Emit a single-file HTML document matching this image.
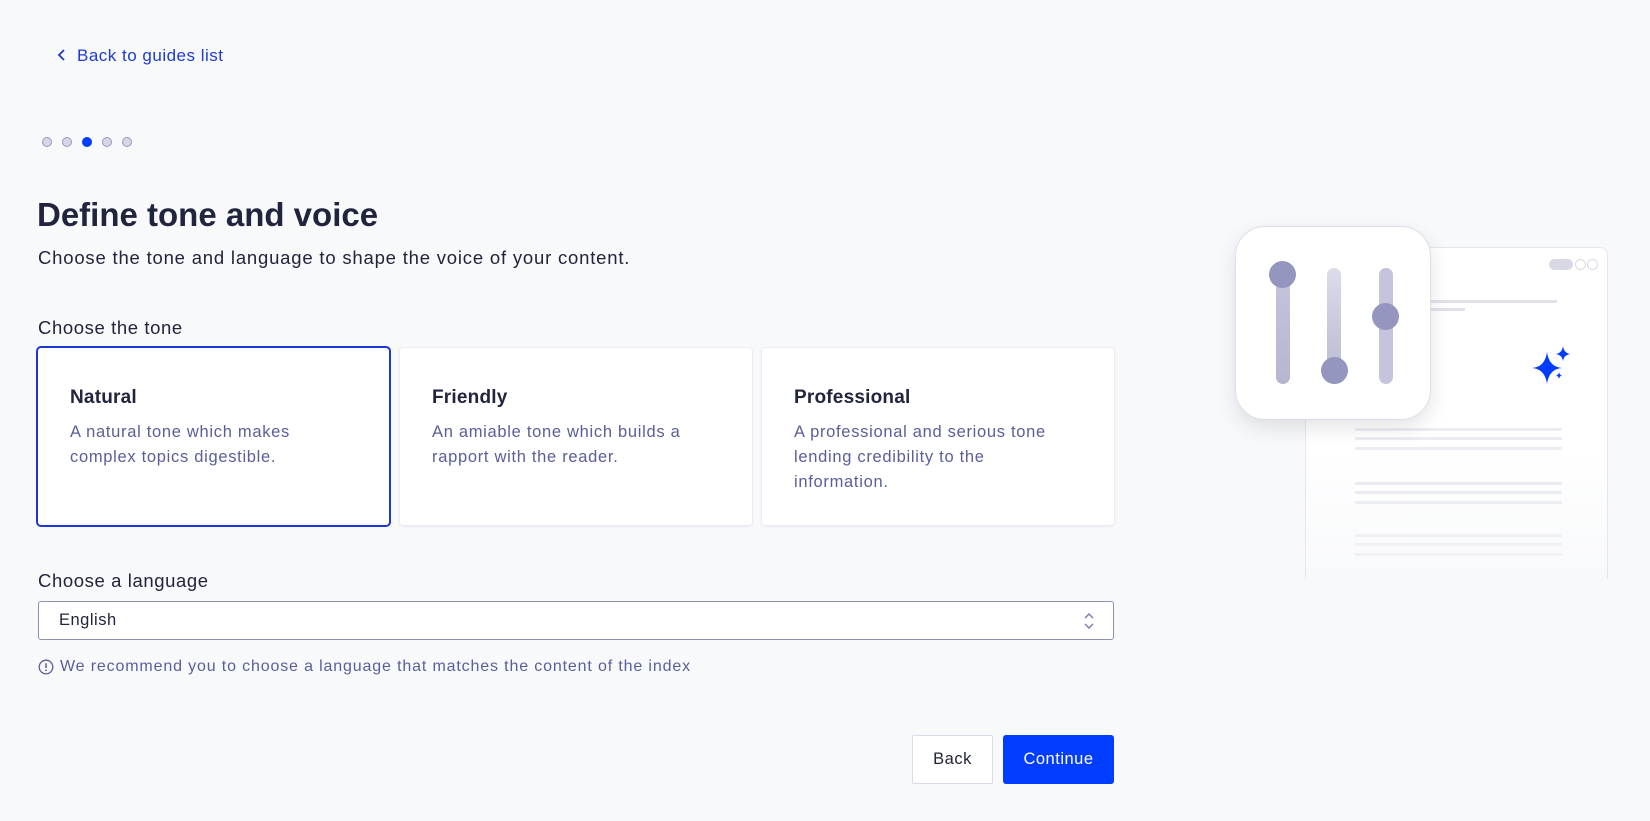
<!DOCTYPE html>
<html><head><meta charset="utf-8"><style>
*{box-sizing:border-box;margin:0;padding:0}
body{width:1650px;height:821px;background:#f8f9fb;font-family:"Liberation Sans",sans-serif;position:relative;overflow:hidden;color:#21243d}
.a{position:absolute;white-space:nowrap}
.dot{position:absolute;top:137px;width:10px;height:10px;border-radius:50%;background:#d6d6e7;border:1px solid #9698c3}
.card{position:absolute;top:348px;height:177px;background:#fff;box-shadow:0 0 0 1px #ececf3,0 1px 3px rgba(35,38,59,.1);border-radius:3px}
.card h3{position:absolute;left:32px;top:39px;font-size:19px;font-weight:600;color:#21243d;letter-spacing:.2px}
.card p{position:absolute;left:32px;top:72px;font-size:16.5px;line-height:25px;color:#5a5e9a;white-space:nowrap;letter-spacing:.7px}
</style></head><body>
<svg class="a" style="left:56px;top:48px" width="12" height="14" viewBox="0 0 12 14"><path d="M8 2 L3 7 L8 12" fill="none" stroke="#1d3bd0" stroke-width="1.8"/></svg>
<div class="a" style="left:77px;top:46px;font-size:17px;color:#1d3bd0;letter-spacing:.5px">Back to guides list</div>
<div class="dot" style="left:42px"></div><div class="dot" style="left:62px"></div>
<div class="dot" style="left:82px;background:#003dff;border-color:#003dff"></div>
<div class="dot" style="left:102px"></div><div class="dot" style="left:122px"></div>
<div class="a" style="left:37px;top:196px;font-size:33px;font-weight:700;color:#21243d">Define tone and voice</div>
<div class="a" style="left:38px;top:247px;font-size:18.5px;letter-spacing:.8px">Choose the tone and language to shape the voice of your content.</div>
<div class="a" style="left:38px;top:317px;font-size:18.5px;letter-spacing:.6px">Choose the tone</div>
<div class="card" style="left:38px;width:351px;box-shadow:0 0 0 2px #1e35d8"><h3>Natural</h3><p>A natural tone which makes<br>complex topics digestible.</p></div>
<div class="card" style="left:400px;width:352px"><h3>Friendly</h3><p>An amiable tone which builds a<br>rapport with the reader.</p></div>
<div class="card" style="left:762px;width:352px"><h3>Professional</h3><p>A professional and serious tone<br>lending credibility to the<br>information.</p></div>
<div class="a" style="left:38px;top:570px;font-size:18.5px;letter-spacing:.6px">Choose a language</div>
<div class="a" style="left:38px;top:601px;width:1076px;height:39px;background:#fff;border:1px solid #8e8fba;border-radius:3px">
<div class="a" style="left:20px;top:9px;font-size:16.5px;color:#21243d;letter-spacing:.5px">English</div>
<svg class="a" style="left:1044px;top:9px" width="12" height="20" viewBox="0 0 12 20"><path d="M2 7 L6 3 L10 7 M2 13 L6 17 L10 13" fill="none" stroke="#777aaf" stroke-width="1.4"/></svg>
</div>
<svg class="a" style="left:38px;top:659px" width="16" height="16" viewBox="0 0 16 16"><circle cx="8" cy="8" r="6.8" fill="none" stroke="#5a5e9a" stroke-width="1.3"/><path d="M8 4.3V9" stroke="#5a5e9a" stroke-width="1.5"/><circle cx="8" cy="11.3" r=".9" fill="#5a5e9a"/></svg>
<div class="a" style="left:60px;top:658px;font-size:16px;color:#5a5e9a;letter-spacing:.85px">We recommend you to choose a language that matches the content of the index</div>
<div class="a" style="left:912px;top:735px;width:81px;height:49px;background:#fff;border:1px solid #dcdce8;border-radius:2px;font-size:16.5px;line-height:47px;text-align:center;color:#21243d;letter-spacing:.5px">Back</div>
<div class="a" style="left:1003px;top:735px;width:111px;height:49px;background:#003dff;border-radius:3px;font-size:16.5px;line-height:49px;text-align:center;color:#fff;letter-spacing:.5px">Continue</div>
<!-- illustration -->
<div class="a" style="left:1305px;top:247px;width:303px;height:332px;background:linear-gradient(#fff 60%,#f8f9fb);border:1.5px solid #e6e6ef;border-bottom:none;border-radius:8px 8px 0 0"></div>
<div class="a" style="left:1549px;top:259px;width:24px;height:11px;border-radius:6px;background:#d9d9e6"></div>
<div class="a" style="left:1575px;top:259px;width:11px;height:11px;border-radius:50%;border:1px solid #d9d9e6"></div>
<div class="a" style="left:1587px;top:259px;width:11px;height:11px;border-radius:50%;border:1px solid #d9d9e6"></div>
<div class="a" style="left:1425px;top:300px;width:132px;height:3px;background:#e2e2ec"></div>
<div class="a" style="left:1425px;top:308px;width:40px;height:3px;background:#e2e2ec"></div>
<div class="a" style="left:1355px;top:428px;width:207px;height:3px;background:#ececf3;box-shadow:0 9px 0 #ececf3,0 19px 0 #ececf3"></div>
<div class="a" style="left:1355px;top:482px;width:207px;height:3px;background:#ececf3;box-shadow:0 9px 0 #ececf3,0 19px 0 #ececf3"></div>
<div class="a" style="left:1355px;top:534px;width:207px;height:3px;background:#f0f0f5;box-shadow:0 9px 0 #f0f0f5,0 19px 0 #f0f0f5"></div>
<svg class="a" style="left:1530px;top:343px" width="45" height="45" viewBox="0 0 45 45"><path d="M17 9 Q19 24 32 25 Q19 26 17 41 Q15 26 2 25 Q15 24 17 9Z" fill="#003dff"/><path d="M33 3 Q34 10 40 11 Q34 12 33 18 Q32 12 26 11 Q32 10 33 3Z" fill="#003dff"/><path d="M29 29 Q29.5 32 32 32.5 Q29.5 33 29 36 Q28.5 33 26 32.5 Q28.5 32 29 29Z" fill="#003dff"/></svg>
<div class="a" style="left:1235px;top:226px;width:196px;height:194px;background:#fff;border:1.5px solid #dedee8;border-radius:30px;box-shadow:0 8px 20px rgba(35,38,59,.12)"></div>
<div class="a" style="left:1276px;top:270px;width:14px;height:114px;border-radius:7px;background:linear-gradient(#c4c4dc,#b6b6d2)"></div>
<div class="a" style="left:1327px;top:268px;width:14px;height:116px;border-radius:7px;background:linear-gradient(#dcdce9,#b8b8d2)"></div>
<div class="a" style="left:1379px;top:268px;width:14px;height:116px;border-radius:7px;background:#c4c4dc"></div>
<div class="a" style="left:1269px;top:261px;width:27px;height:27px;border-radius:50%;background:#9496c0"></div>
<div class="a" style="left:1321px;top:357px;width:27px;height:27px;border-radius:50%;background:#9496c0"></div>
<div class="a" style="left:1372px;top:303px;width:27px;height:27px;border-radius:50%;background:#9496c0"></div>
</body></html>
